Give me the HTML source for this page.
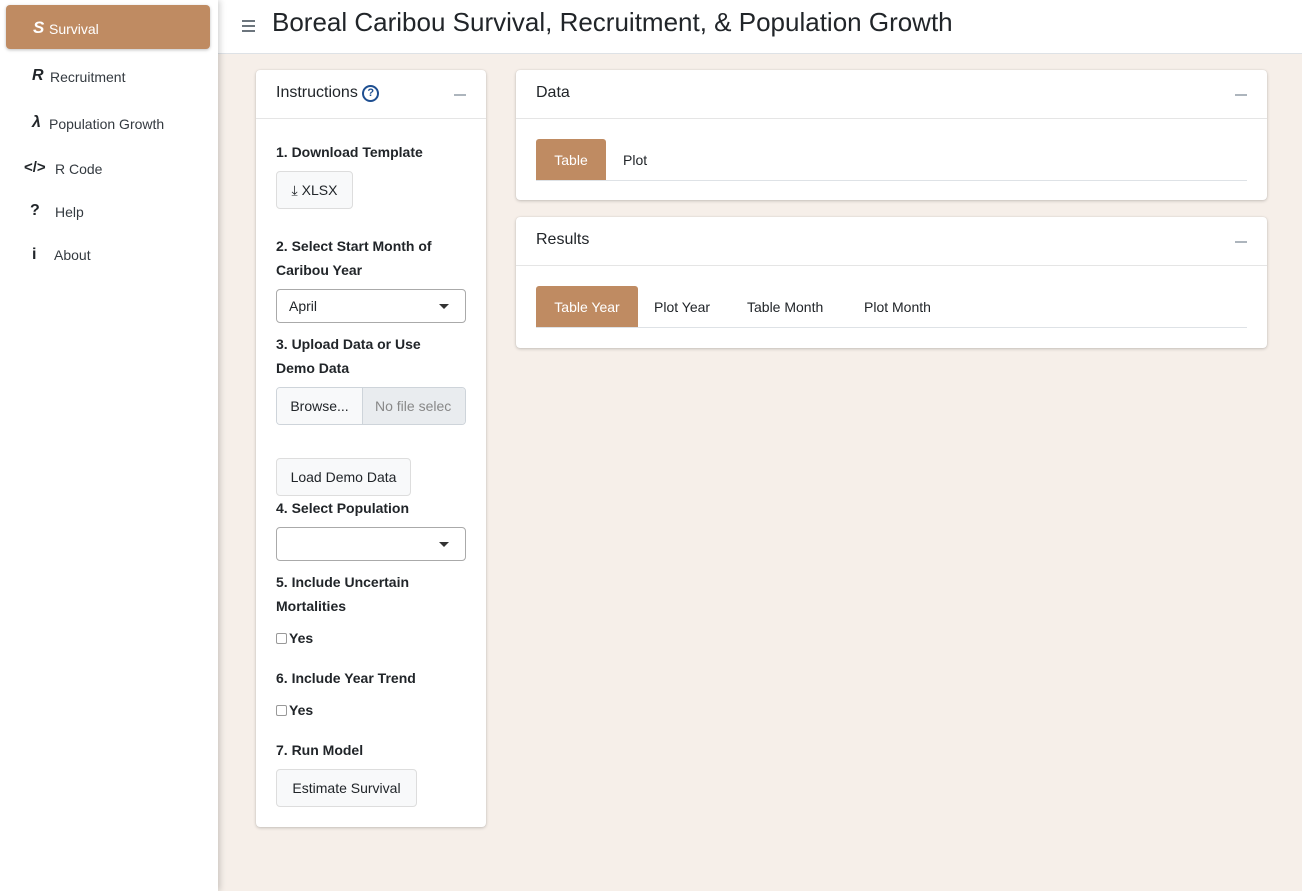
<!DOCTYPE html>
<html><head><style>
*{box-sizing:border-box;margin:0;padding:0}
body{width:1302px;height:891px;overflow:hidden;font-family:"Liberation Sans",sans-serif;background:#f6efe9;color:#212529;position:relative;font-size:14px}
.sb{position:absolute;left:0;top:0;width:218px;height:891px;background:#fff;box-shadow:2px 0 6px rgba(0,0,0,.18);z-index:2}
.act{position:absolute;left:6px;top:5px;width:204px;height:44px;background:#bf8b62;border-radius:4px;box-shadow:0 1px 3px rgba(0,0,0,.25);color:#fff;font-size:14px}
.it{position:absolute;font-size:14px;color:#343a40}
.ic{position:absolute;font-weight:bold;font-style:italic;font-size:16px}
.hdr{position:absolute;left:218px;top:0;right:0;height:54px;background:#fff;border-bottom:1px solid #dee2e6}
.hdr h1{position:absolute;left:54px;top:7px;font-weight:normal;font-size:26px;color:#212529}
.burg{position:absolute;left:24px;top:20px;width:13px}
.burg i{display:block;height:2px;background:#6c757d;margin-bottom:3px}
.card{position:absolute;background:#fff;border-radius:4px;box-shadow:0 0 1px rgba(0,0,0,.13),0 1px 3px rgba(0,0,0,.2)}
.ch{height:49px;border-bottom:1px solid #e5e5e5;padding:14px 20px;font-size:16px;position:relative}
.min{position:absolute;right:20px;top:24px;width:12px;height:2px;background:#adb5bd}
.lbl{position:absolute;left:20px;font-weight:bold;font-size:14px;line-height:24px}
.btn{position:absolute;left:20px;background:#f8f9fa;border:1px solid #ddd;border-radius:4px;font-size:14px;color:#212529;text-align:center;line-height:36px}
.sel{position:absolute;left:20px;width:190px;height:34px;border:1px solid #aaa;border-radius:4px;padding:8px 12px;font-size:14px}
.sel:after{content:"";position:absolute;right:16px;top:14px;border:5px solid transparent;border-top:5px solid #333;border-bottom:0}
.cb{position:absolute;left:20px;font-weight:bold;font-size:14px}
.cb i{display:inline-block;width:11px;height:11px;border:1px solid #999;border-radius:2px;vertical-align:-1px;margin-right:2px}
.tabs{position:absolute;left:20px;right:20px;height:42px;border-bottom:1px solid #dee2e6}
.tab{position:absolute;top:0;height:41px;line-height:43px;font-size:14px;text-align:left}
.tab.on{background:#bf8b62;color:#fff;border-radius:3px 3px 0 0;text-align:center}
</style></head><body>
<div class="sb">
<div class="act"><span class="ic" style="left:27px;top:13px;font-size:17px">S</span><span style="position:absolute;left:43px;top:16px">Survival</span></div>
<span class="ic" style="left:32px;top:67px">R</span><span class="it" style="left:50px;top:69px">Recruitment</span>
<span class="ic" style="left:32px;top:114px">λ</span><span class="it" style="left:49px;top:116px">Population Growth</span>
<span class="ic" style="left:24px;top:159px;font-style:normal;font-size:15px">&lt;/&gt;</span><span class="it" style="left:55px;top:161px">R Code</span>
<span class="ic" style="left:30px;top:202px;font-style:normal">?</span><span class="it" style="left:55px;top:204px">Help</span>
<span class="ic" style="left:32px;top:246px;font-style:normal">i</span><span class="it" style="left:54px;top:247px">About</span>
</div>
<div class="hdr"><div class="burg"><i></i><i></i><i></i></div><h1>Boreal Caribou Survival, Recruitment, &amp; Population Growth</h1></div>

<div class="card" style="left:256px;top:70px;width:230px;height:757px">
<div class="ch">Instructions <span style="display:inline-block;width:17px;height:17px;border:2px solid #1e4f91;border-radius:50%;color:#1e4f91;font-size:11px;font-weight:bold;text-align:center;line-height:13px;vertical-align:1px">?</span><div class="min"></div></div>
<div class="lbl" style="top:70px">1. Download Template</div>
<div class="btn" style="top:101px;width:77px">⤓ XLSX</div>
<div class="lbl" style="top:164px;width:190px">2. Select Start Month of Caribou Year</div>
<div class="sel" style="top:219px">April</div>
<div class="lbl" style="top:262px;width:170px">3. Upload Data or Use Demo Data</div>
<div style="position:absolute;left:20px;top:317px;width:190px;height:38px;border:1px solid #ced4da;border-radius:4px;overflow:hidden;font-size:14px">
<div style="position:absolute;left:0;top:0;width:86px;height:36px;background:#f8f9fa;border-right:1px solid #ced4da;line-height:36px;text-align:center">Browse...</div>
<div style="position:absolute;left:86px;top:0;right:0;height:36px;background:#e9ecef;color:#888;line-height:36px;padding-left:12px;white-space:nowrap">No file selec</div></div>
<div class="btn" style="top:388px;width:135px">Load Demo Data</div>
<div class="lbl" style="top:426px">4. Select Population</div>
<div class="sel" style="top:457px"></div>
<div class="lbl" style="top:500px;width:190px">5. Include Uncertain Mortalities</div>
<div class="cb" style="top:560px"><i></i>Yes</div>
<div class="lbl" style="top:596px">6. Include Year Trend</div>
<div class="cb" style="top:632px"><i></i>Yes</div>
<div class="lbl" style="top:668px">7. Run Model</div>
<div class="btn" style="top:699px;width:141px">Estimate Survival</div>
</div>

<div class="card" style="left:516px;top:70px;width:751px;height:130px">
<div class="ch">Data<div class="min"></div></div>
<div class="tabs" style="top:69px"><div class="tab on" style="left:0;width:70px">Table</div><div class="tab" style="left:87px;width:60px">Plot</div></div>
</div>
<div class="card" style="left:516px;top:217px;width:751px;height:131px">
<div class="ch">Results<div class="min"></div></div>
<div class="tabs" style="top:69px"><div class="tab on" style="left:0;width:102px">Table Year</div><div class="tab" style="left:118px;width:80px">Plot Year</div><div class="tab" style="left:211px;width:100px">Table Month</div><div class="tab" style="left:328px;width:100px">Plot Month</div></div>
</div>
</body></html>
